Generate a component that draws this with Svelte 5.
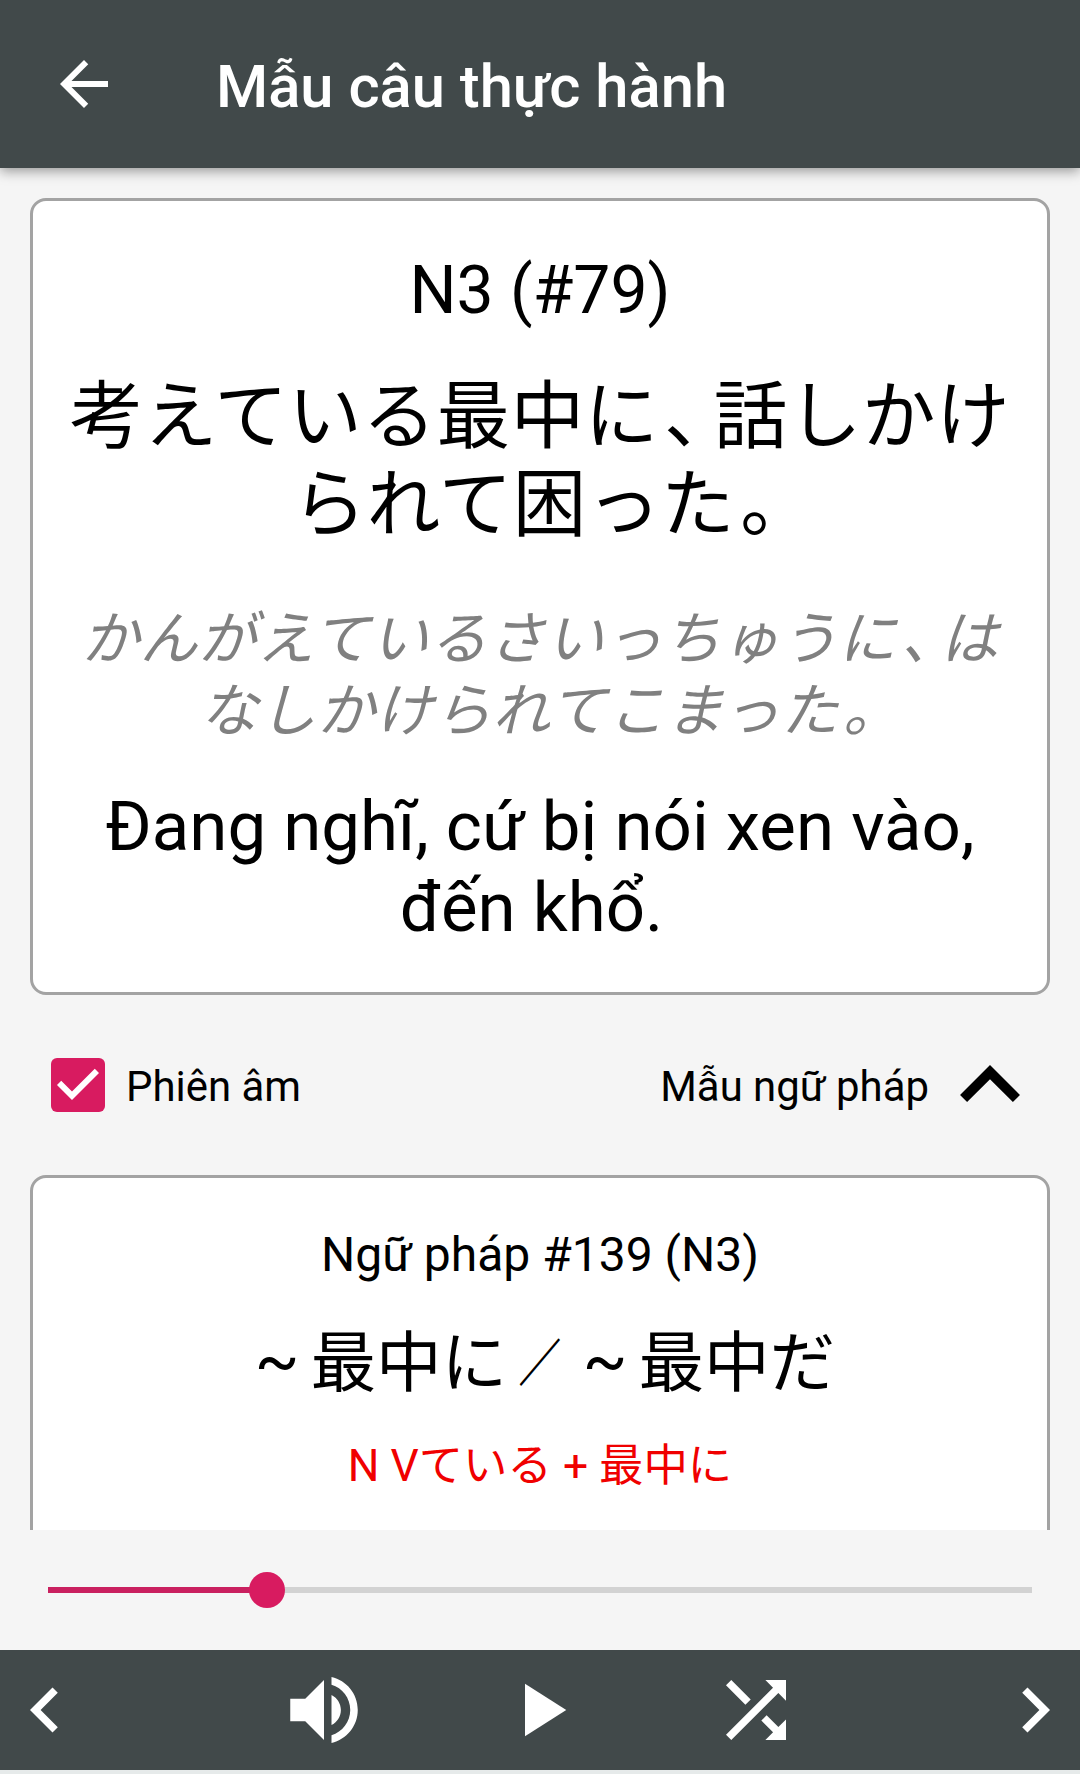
<script lang="ts">
    let showReading = true;
    let showGrammar = true;
    let playing = false;
    let progress = 22.25;

    const sentence = {
        title: "N3 (#79)",
        japanese: "考えている最中に、話しかけられて困った。",
        reading: "かんがえているさいっちゅうに、はなしかけられてこまった。",
        meaning: "Đang nghĩ, cứ bị nói xen vào, đến khổ.\u00a0",
    };

    const grammar = {
        title: "Ngữ pháp #139 (N3)",
        patterns: ["最中に", "最中だ"],
        formula: "N Vている + 最中に",
    };

    const controls = [
        {
            name: "previous",
            label: "Câu trước",
            path: "M15.41 7.41L14 6l-6 6 6 6 1.41-1.41L10.83 12z",
        },
        {
            name: "speak",
            label: "Nghe",
            path: "M3 9v6h4l5 5V4L7 9H3zm13.5 3c0-1.77-1.02-3.29-2.5-4.03v8.05c1.48-.73 2.5-2.25 2.5-4.02zM14 3.23v2.06c2.89.86 5 3.54 5 6.71s-2.11 5.85-5 6.71v2.06c4.01-.91 7-4.49 7-8.77s-2.99-7.86-7-8.77z",
        },
        { name: "play", label: "Phát", path: "M8 5v14l11-7z" },
        {
            name: "shuffle",
            label: "Ngẫu nhiên",
            path: "M10.59 9.17L5.41 4 4 5.41l5.17 5.17 1.42-1.41zM14.5 4l2.04 2.04L4 18.59 5.41 20 17.96 7.46 20 9.5V4h-5.5zm.33 9.41l-1.41 1.41 3.13 3.13L14.5 20H20v-5.5l-2.04 2.04-3.13-3.13z",
        },
        {
            name: "next",
            label: "Câu sau",
            path: "M10 6L8.59 7.41 13.17 12l-4.58 4.59L10 18l6-6z",
        },
    ];

    // keeps 、 and 。 as separate parts so they can be set narrower
    function splitMarks(text: string): string[] {
        return text.split(/([、。])/).filter((part) => part !== "");
    }

    function press(name: string) {
        if (name === "play") {
            playing = !playing;
        } else if (name === "previous") {
            progress = Math.max(0, progress - 1);
        } else if (name === "next") {
            progress = Math.min(100, progress + 1);
        }
    }
</script>

<div class="screen">
    <header>
        <button class="back" aria-label="Quay lại">
            <svg viewBox="0 0 24 24">
                <path
                    d="M20 11H7.83l5.59-5.59L12 4l-8 8 8 8 1.41-1.41L7.83 13H20v-2z"
                />
            </svg>
        </button>
        <h1>Mẫu câu thực hành</h1>
    </header>

    <main>
        <section class="card">
            <h2>{sentence.title}</h2>
            <p class="japanese" lang="ja">
                {#each splitMarks(sentence.japanese) as part}<span
                        class:comma={part === "、"}
                        class:stop={part === "。"}>{part}</span
                    >{/each}
            </p>
            {#if showReading}
                <p class="reading" lang="ja">
                    {#each splitMarks(sentence.reading) as part}<span
                            class:comma={part === "、"}
                            class:stop={part === "。"}>{part}</span
                        >{/each}
                </p>
            {/if}
            <p class="meaning">{sentence.meaning}</p>
        </section>

        <div class="options">
            <button
                class="option"
                role="checkbox"
                aria-checked={showReading}
                on:click={() => (showReading = !showReading)}
            >
                <span class="box" class:checked={showReading}>
                    {#if showReading}
                        <svg viewBox="3 3 18 18">
                            <path
                                d="M10 17l-5-5 1.41-1.41L10 14.17l7.59-7.59L19 8z"
                            />
                        </svg>
                    {/if}
                </span>
                <span class="option-text">Phiên âm</span>
            </button>
            <button
                class="option"
                on:click={() => (showGrammar = !showGrammar)}
            >
                <span class="option-text">Mẫu ngữ pháp</span>
                <svg
                    class="arrow"
                    class:closed={!showGrammar}
                    viewBox="6 8 12 7.41"
                >
                    <path
                        d="M12 8l-6 6 1.41 1.41L12 10.83l4.59 4.58L18 14z"
                    />
                </svg>
            </button>
        </div>

        {#if showGrammar}
            <section class="card grammar">
                <h3>{grammar.title}</h3>
                <p class="pattern" lang="ja">
                    {#each grammar.patterns as pattern, i}
                        {#if i > 0}<span class="slash">／</span>{/if}<span
                            class="tilde">~</span
                        >{pattern}
                    {/each}
                </p>
                <p class="formula" lang="ja">{grammar.formula}</p>
            </section>
        {/if}
    </main>

    <div class="slider">
        <div class="track">
            <div class="fill" style="width: {progress}%">
                <span class="thumb"></span>
            </div>
        </div>
    </div>

    <nav>
        {#each controls as control}
            <button
                class={control.name}
                aria-label={control.label}
                on:click={() => press(control.name)}
            >
                <svg viewBox="0 0 24 24"><path d={control.path} /></svg>
            </button>
        {/each}
    </nav>
</div>

<style>
    :global(body) {
        background-color: #e6eaea;
    }

    .screen {
        display: flex;
        flex-direction: column;
        height: 1770px;
        background-color: #f5f5f5;
        color: #000;
        font-family: Roboto, "Noto Sans CJK JP", sans-serif;
    }

    button {
        all: unset;
        cursor: pointer;
    }

    svg {
        display: block;
        fill: currentColor;
    }

    h1,
    h2,
    h3,
    p {
        margin: 0;
        font-weight: 400;
    }

    header {
        display: flex;
        align-items: center;
        flex: none;
        height: 168px;
        padding-left: 48px;
        gap: 96px;
        background-color: #41494a;
        color: #fff;
        box-shadow: 0 3px 12px rgba(0, 0, 0, 0.4);
        z-index: 1;
    }

    .back svg {
        width: 72px;
        height: 72px;
    }

    h1 {
        padding-top: 5px;
        font-size: 59.7px;
        font-weight: 500;
        line-height: 80px;
    }

    main {
        flex: 1;
        min-height: 0;
        overflow: hidden;
        padding: 30px 30px 0;
    }

    .card {
        box-sizing: border-box;
        height: 797px;
        padding: 51px 27px 0;
        border: 3px solid #a3a3a3;
        border-radius: 16px;
        background-color: #fff;
        text-align: center;
    }

    h2 {
        font-size: 66px;
        line-height: 78px;
    }

    .japanese {
        margin-top: 43px;
        font-size: 73.5px;
        letter-spacing: 0.6px;
        line-height: 88px;
    }

    .reading {
        margin-top: 55px;
        color: #808080;
        font-size: 57.75px;
        font-style: italic;
        letter-spacing: 0.7px;
        line-height: 71.5px;
    }

    .comma,
    .stop {
        font-feature-settings: "halt";
    }

    .comma {
        margin: 0 0.17em 0 0.07em;
    }

    .stop {
        margin: 0 0.13em 0 0.07em;
    }

    .meaning {
        margin-top: 39px;
        font-size: 69px;
        line-height: 81px;
    }

    .options {
        display: flex;
        align-items: center;
        justify-content: space-between;
        height: 180px;
        padding: 0 30px 0 21px;
    }

    .option {
        display: flex;
        align-items: center;
    }

    .option-text {
        padding-top: 3px;
        font-size: 41.9px;
        line-height: 50px;
    }

    .box {
        box-sizing: border-box;
        width: 54px;
        height: 54px;
        margin-right: 21px;
        border: 6px solid #757575;
        border-radius: 6px;
    }

    .box.checked {
        border: none;
        background-color: #d81b60;
        color: #fff;
    }

    .arrow {
        width: 60px;
        height: 37px;
        margin: 0 0 3px 31px;
    }

    .arrow.closed {
        transform: rotate(180deg);
    }

    .grammar {
        height: 600px;
        padding-top: 49px;
    }

    h3 {
        font-size: 48px;
        line-height: 56px;
    }

    .pattern {
        margin-top: 42px;
        font-size: 65.6px;
        line-height: 78px;
    }

    .tilde {
        margin: 0 11px 0 10px;
        line-height: 1;
        vertical-align: 3px;
    }

    .slash {
        display: inline-block;
        font-weight: 700;
        line-height: 1;
        transform: scale(0.65, 0.77);
    }

    .formula {
        margin-top: 35px;
        color: #f00000;
        font-size: 44.4px;
        line-height: 56px;
    }

    .slider {
        display: flex;
        align-items: center;
        flex: none;
        height: 120px;
        padding: 0 48px;
    }

    .track {
        width: 100%;
        height: 6px;
        background-color: #d2d2d2;
    }

    .fill {
        display: flex;
        align-items: center;
        justify-content: flex-end;
        height: 6px;
        background-color: #c9205f;
    }

    .thumb {
        flex: none;
        width: 36px;
        height: 36px;
        margin-right: -18px;
        border-radius: 50%;
        background-color: #d81b60;
    }

    nav {
        display: grid;
        grid-template-columns: repeat(5, 1fr);
        align-items: center;
        justify-items: center;
        flex: none;
        height: 120px;
        background-color: #41494a;
        color: #fff;
    }

    nav svg {
        width: 90px;
        height: 90px;
    }

    .previous {
        justify-self: start;
    }

    .next {
        justify-self: end;
    }
</style>
